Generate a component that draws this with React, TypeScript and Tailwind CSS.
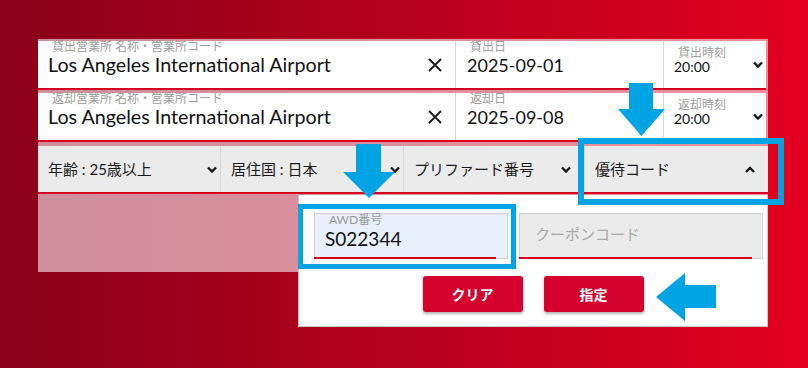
import React from "react";

const FONT = "Lato, 'Noto Sans CJK JP', sans-serif";

const Chevron = ({ up = false }: { up?: boolean }) => (
  <svg width="10" height="7" viewBox="0 0 10 7" className="shrink-0">
    <polyline
      points={up ? "1,6 5,2 9,6" : "1,1.5 5,5.5 9,1.5"}
      fill="none"
      stroke="#151515"
      strokeWidth="2.4"
    />
  </svg>
);

const ClearIcon = () => (
  <svg width="14" height="14" viewBox="0 0 14 14" className="shrink-0">
    <path d="M1 1 L13 13 M13 1 L1 13" stroke="#1c1c1c" strokeWidth="1.9" fill="none" />
  </svg>
);

const DownArrow = ({ w, h, shaftL, shaftR, neck }: { w: number; h: number; shaftL: number; shaftR: number; neck: number }) => (
  <svg width={w} height={h} viewBox={`0 0 ${w} ${h}`}>
    <polygon
      points={`${shaftL},0 ${shaftR},0 ${shaftR},${neck} ${w},${neck} ${w / 2},${h} 0,${neck} ${shaftL},${neck}`}
      fill="#00a3e4"
    />
  </svg>
);

// one line of the location / date / time inputs
const PlaceRow = ({ place, date, time, placeLabel, dateLabel, timeLabel, className }: {
  place: string; date: string; time: string; placeLabel: string; dateLabel: string; timeLabel: string; className: string;
}) => (
  <div className={`mr-[2px] h-[49px] flex bg-white border-b-2 border-[#d4001e] ${className}`}>
    <div className="w-[418px] flex items-center border-r border-[#d6d6d6] pr-[13px]">
      <div className="flex-1 flex flex-col self-start pl-[10px]">
        <span className="pl-[4px] text-[12px] leading-[11px] text-[#9d9d9d]">{placeLabel}</span>
        <span className="text-[19.7px] leading-[26px] text-[#111]">{place}</span>
      </div>
      <div className="mt-[1px]">
        <ClearIcon />
      </div>
    </div>
    <div className="w-[208px] flex flex-col border-r border-[#d6d6d6] pl-[11px]">
      <span className="pl-[3px] text-[12px] leading-[11px] text-[#9d9d9d]">{dateLabel}</span>
      <span className="text-[18px] leading-[26px] text-[#111]">{date}</span>
    </div>
    <div className="flex-1 flex items-center pr-[3px]">
      <div className="flex-1 flex flex-col self-start pt-[5px] pl-[10px]">
        <span className="pl-[4px] text-[12px] leading-[13px] text-[#9d9d9d]">{timeLabel}</span>
        <span className="text-[14px] leading-[16px] text-[#111]">{time}</span>
      </div>
      <Chevron />
    </div>
  </div>
);

const SelectCell = ({ text, up = false, className }: { text: string; up?: boolean; className: string }) => (
  <div className={`flex items-center justify-between pl-[10px] text-[15px] text-[#1a1a1a] ${className}`}>
    <span>{text}</span>
    <Chevron up={up} />
  </div>
);

export default function App() {
  return (
    <div
      className="relative w-[808px] h-[368px] overflow-hidden bg-linear-to-r from-[#89001a] to-[#e3001f] pt-[39px] pl-[38px]"
      style={{ fontFamily: FONT }}
    >
      <div className="w-[730px] h-[233px] bg-white/[0.56] flex flex-col">
        <PlaceRow
          className="mt-[2px]"
          placeLabel="貸出営業所 名称・営業所コード"
          place="Los Angeles International Airport"
          dateLabel="貸出日"
          date="2025-09-01"
          timeLabel="貸出時刻"
          time="20:00"
        />
        <PlaceRow
          className="mt-[3px]"
          placeLabel="返却営業所 名称・営業所コード"
          place="Los Angeles International Airport"
          dateLabel="返却日"
          date="2025-09-08"
          timeLabel="返却時刻"
          time="20:00"
        />
        <div className="mt-[4px] h-[48px] flex bg-[#ebebeb] border-b-2 border-[#d4001e]">
          <SelectCell text="年齢 : 25歳以上" className="w-[183px] border-r border-[#d8d8d8] pr-[3px]" />
          <SelectCell text="居住国 : 日本" className="w-[183px] border-r border-[#d8d8d8] pr-[3px]" />
          <SelectCell text="プリファード番号" className="w-[181px] border-r border-[#d8d8d8] pr-[13px]" />
          <SelectCell text="優待コード" up className="flex-1 pr-[13px] pl-[8px]" />
        </div>
      </div>

      {/* 優待コード dropdown */}
      <div className="absolute left-[298px] top-[195px] w-[470px] h-[132px] bg-white border-x border-b border-[#c9c9c9] flex flex-col pt-[18px] pl-[15px]">
        <div className="flex gap-[11px]">
          <div className="relative w-[194px] h-[46px] bg-[#e8f0fe] border border-[#cdcdcd] flex flex-col">
            <span className="pl-[14px] text-[12px] leading-[12px] text-[#999]">AWD番号</span>
            <span className="pl-[10px] mt-[2px] text-[19px] leading-[22px] text-[#111]">S022344</span>
            <div className="absolute -left-px -bottom-px w-[182px] h-[2px] bg-[#d4001e]" />
          </div>
          <div className="relative w-[244px] h-[46px] bg-[#ebebeb] border border-[#cdcdcd] flex items-center pl-[15px] pb-[3px]">
            <span className="text-[15px] text-[#a9a9a9]">クーポンコード</span>
            <div className="absolute -left-px -bottom-px w-[233px] h-[2px] bg-[#d4001e]" />
          </div>
        </div>
        <div className="mt-[17px] flex justify-center gap-[21px] pr-[15px]">
          <button className="w-[100px] h-[36px] rounded-[3px] bg-[#d6002e] text-white text-[14px] font-bold shadow-[0_2px_3px_rgba(0,0,0,0.3)]">
            クリア
          </button>
          <button className="w-[100px] h-[36px] rounded-[3px] bg-[#d6002e] text-white text-[14px] font-bold shadow-[0_2px_3px_rgba(0,0,0,0.3)]">
            指定
          </button>
        </div>
      </div>

      {/* annotations */}
      <div className="absolute left-[298px] top-[204px] w-[218px] h-[65px] border-[5px] border-[#00a3e4]" />
      <div className="absolute left-[578px] top-[138px] w-[206px] h-[67px] border-[6px] border-[#00a3e4]" />
      <div className="absolute left-[343px] top-[144px]">
        <DownArrow w={52} h={54} shaftL={13} shaftR={38} neck={28} />
      </div>
      <div className="absolute left-[618px] top-[83px]">
        <DownArrow w={47} h={53} shaftL={11} shaftR={35} neck={26} />
      </div>
      <div className="absolute left-[656px] top-[273px]">
        <svg width="60" height="48" viewBox="0 0 60 48">
          <polygon points="0,24 29,0 29,12 60,12 60,35 29,35 29,48" fill="#00a3e4" />
        </svg>
      </div>
    </div>
  );
}
